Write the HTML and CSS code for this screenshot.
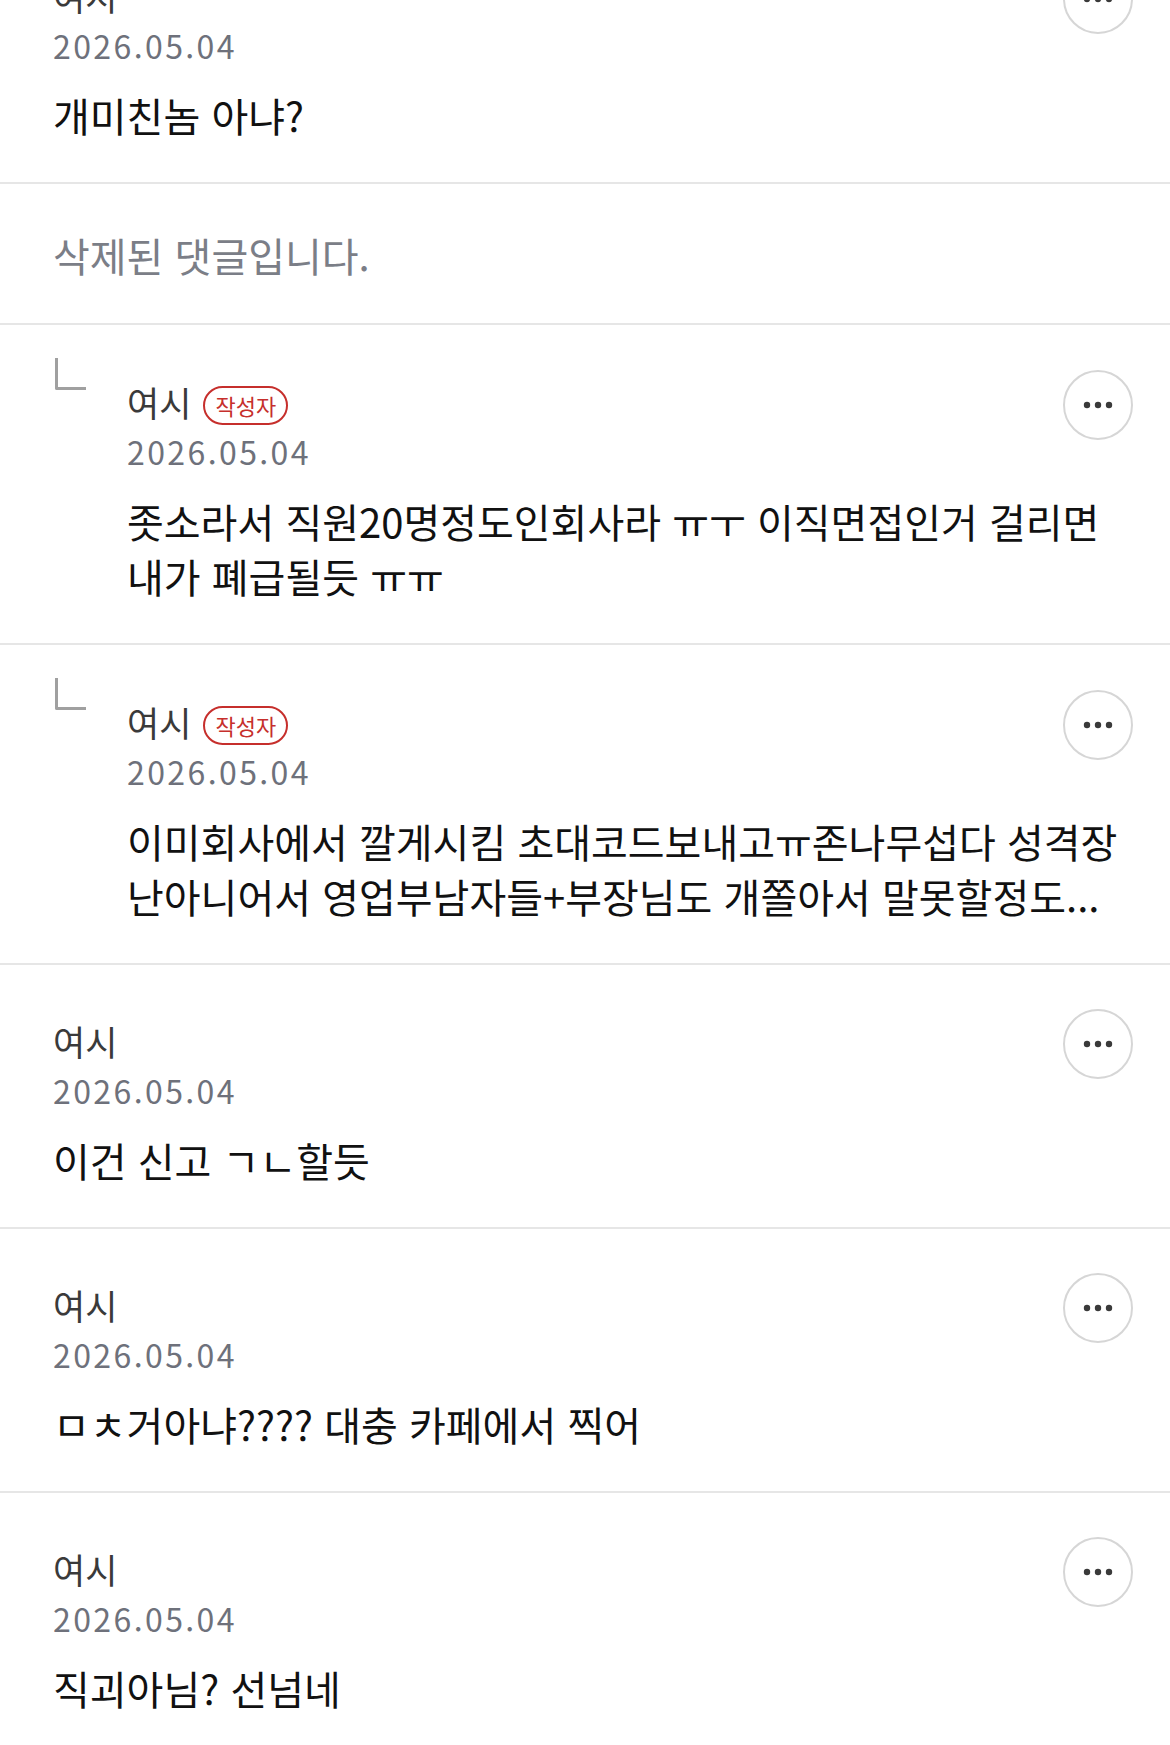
FILE: index.html
```html
<!DOCTYPE html>
<html lang="ko">
<head>
    <meta charset="UTF-8">
    <meta name="viewport" content="width=device-width, initial-scale=1.0">
    <title>댓글</title>
    <link rel="stylesheet" href="styles.css">
</head>
<body>
    <div class="comments">
        <!-- first comment is scrolled partly out of view -->
        <div class="comment">
            <div class="comment-main">
                <div class="comment-head">
                    <span class="author">여시</span>
                    <button class="more" aria-label="더보기">
                        <svg width="34" height="8" viewBox="0 0 34 8"><circle cx="6" cy="4" r="3.2"/><circle cx="17" cy="4" r="3.2"/><circle cx="28" cy="4" r="3.2"/></svg>
                    </button>
                </div>
                <div class="date">2026.05.04</div>
                <p class="text">개미친놈 아냐?</p>
            </div>
        </div>

        <div class="comment deleted">
            <p class="text">삭제된 댓글입니다.</p>
        </div>

        <div class="comment reply">
            <span class="reply-mark"></span>
            <div class="comment-main">
                <div class="comment-head">
                    <span class="author">여시</span>
                    <span class="badge">작성자</span>
                    <button class="more" aria-label="더보기">
                        <svg width="34" height="8" viewBox="0 0 34 8"><circle cx="6" cy="4" r="3.2"/><circle cx="17" cy="4" r="3.2"/><circle cx="28" cy="4" r="3.2"/></svg>
                    </button>
                </div>
                <div class="date">2026.05.04</div>
                <p class="text">좃소라서 직원20명정도인회사라 ㅠㅜ 이직면접인거 걸리면 내가 폐급될듯 ㅠㅠ</p>
            </div>
        </div>

        <div class="comment reply">
            <span class="reply-mark"></span>
            <div class="comment-main">
                <div class="comment-head">
                    <span class="author">여시</span>
                    <span class="badge">작성자</span>
                    <button class="more" aria-label="더보기">
                        <svg width="34" height="8" viewBox="0 0 34 8"><circle cx="6" cy="4" r="3.2"/><circle cx="17" cy="4" r="3.2"/><circle cx="28" cy="4" r="3.2"/></svg>
                    </button>
                </div>
                <div class="date">2026.05.04</div>
                <p class="text">이미회사에서 깔게시킴 초대코드보내고ㅠ존나무섭다 성격장난아니어서 영업부남자들+부장님도 개쫄아서 말못할정도...</p>
            </div>
        </div>

        <div class="comment">
            <div class="comment-main">
                <div class="comment-head">
                    <span class="author">여시</span>
                    <button class="more" aria-label="더보기">
                        <svg width="34" height="8" viewBox="0 0 34 8"><circle cx="6" cy="4" r="3.2"/><circle cx="17" cy="4" r="3.2"/><circle cx="28" cy="4" r="3.2"/></svg>
                    </button>
                </div>
                <div class="date">2026.05.04</div>
                <p class="text">이건 신고 ㄱㄴ할듯</p>
            </div>
        </div>

        <div class="comment">
            <div class="comment-main">
                <div class="comment-head">
                    <span class="author">여시</span>
                    <button class="more" aria-label="더보기">
                        <svg width="34" height="8" viewBox="0 0 34 8"><circle cx="6" cy="4" r="3.2"/><circle cx="17" cy="4" r="3.2"/><circle cx="28" cy="4" r="3.2"/></svg>
                    </button>
                </div>
                <div class="date">2026.05.04</div>
                <p class="text">ㅁㅊ거아냐???? 대충 카페에서 찍어</p>
            </div>
        </div>

        <div class="comment">
            <div class="comment-main">
                <div class="comment-head">
                    <span class="author">여시</span>
                    <button class="more" aria-label="더보기">
                        <svg width="34" height="8" viewBox="0 0 34 8"><circle cx="6" cy="4" r="3.2"/><circle cx="17" cy="4" r="3.2"/><circle cx="28" cy="4" r="3.2"/></svg>
                    </button>
                </div>
                <div class="date">2026.05.04</div>
                <p class="text">직괴아님? 선넘네</p>
            </div>
        </div>
    </div>
</body>
</html>
```

FILE: styles.css
```css
/* Global */
body {
    margin: 0;
    background-color: #ffffff;
    font-family: "Noto Sans CJK KR", "Noto Sans", sans-serif;
    color: #111111;
}

.comments {
    margin-top: -80px; /* page is scrolled */
}

/* One comment row */
.comment {
    display: flex;
    padding: 44px 37px 39px 53px;
    border-bottom: 2px solid #e6e6e6;
}

.comment:last-child {
    border-bottom: none;
}

.comment-main {
    flex: 1;
    min-width: 0;
}

.comment-head {
    display: flex;
    align-items: center;
    height: 70px;
}

.author {
    font-size: 35px;
    color: #3a3a3a;
    line-height: 1;
    padding-bottom: 8px; /* sits a bit above the button centre */
}

.badge {
    margin-left: 12px;
    padding: 0 10px;
    height: 35px;
    line-height: 35px;
    border: 2px solid #c62f2c;
    border-radius: 20px;
    color: #c62f2c;
    font-size: 22px;
}

.more {
    margin-left: auto;
    width: 70px;
    height: 70px;
    padding: 0;
    border: 2px solid #d6d6d6;
    border-radius: 50%;
    background: #ffffff;
    display: flex;
    align-items: center;
    justify-content: center;
}

.more svg {
    fill: #3a3a3a;
}

.date {
    margin-top: -7px;
    font-size: 32px;
    line-height: 36px;
    color: #6e717b;
    letter-spacing: 2.4px;
}

.text {
    margin: 25px 0 0;
    font-size: 40px;
    line-height: 55px;
    color: #111111;
}

/* Deleted comment */
.deleted {
    padding-top: 44px;
    padding-bottom: 40px;
}

.deleted .text {
    margin: 0;
    color: #7b7e87;
}

/* Reply */
.reply {
    padding-top: 33px;
}

.reply .comment-main {
    padding-top: 12px;
}

.reply-mark {
    flex: none;
    width: 28px;
    height: 29px;
    margin-left: 2px;
    margin-right: 41px;
    border-left: 3px solid #a0a0a0;
    border-bottom: 3px solid #a0a0a0;
    border-bottom-left-radius: 2px;
}
```
